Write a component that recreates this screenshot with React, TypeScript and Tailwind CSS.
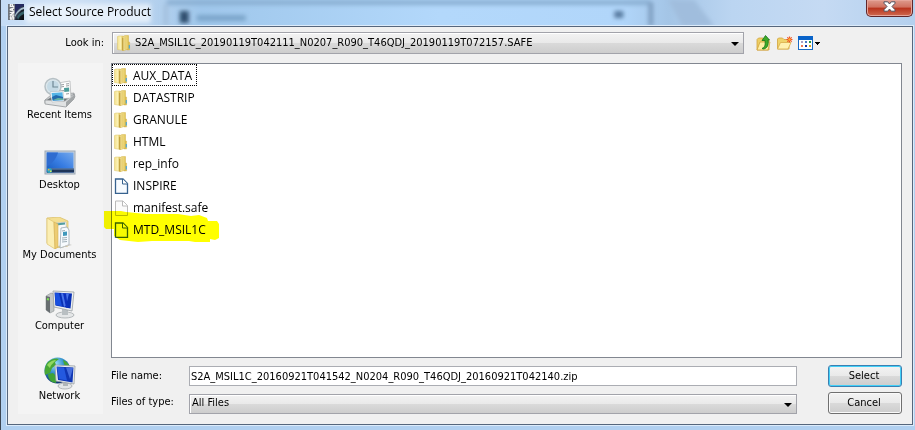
import { useState } from "react";
import type { ReactNode } from "react";

type FileEntry = {
  name: string;
  kind: "folder" | "doc" | "blank";
  marked?: boolean;
};

const files: FileEntry[] = [
  { name: "AUX_DATA", kind: "folder" },
  { name: "DATASTRIP", kind: "folder" },
  { name: "GRANULE", kind: "folder" },
  { name: "HTML", kind: "folder" },
  { name: "rep_info", kind: "folder" },
  { name: "INSPIRE", kind: "doc" },
  { name: "manifest.safe", kind: "blank" },
  { name: "MTD_MSIL1C", kind: "doc", marked: true },
];

const SnapLogo = () => (
  <svg width="16" height="16" viewBox="0 0 16 16" aria-hidden="true">
    <defs>
      <linearGradient id="orbit" x1="0" y1="0" x2="1" y2="1">
        <stop offset="0" stopColor="#15171f" />
        <stop offset=".35" stopColor="#4b5a74" />
        <stop offset=".6" stopColor="#171d29" />
        <stop offset="1" stopColor="#07080c" />
      </linearGradient>
    </defs>
    <rect width="16" height="16" fill="#70757c" />
    <rect x="7" width="9" height="16" fill="url(#orbit)" />
    <path d="M7 0h9v2C12 3 9 6 7 10Z" fill="#242a60" />
    <path d="M7 11C9 7 12 4 16 3v2C12 6 9 9 7 13Z" fill="#a9c1cf" />
    <path d="M9 13c1-3 4-5 7-6v3c-3 1-5 3-6 6Z" fill="#356068" />
    <text
      transform="translate(6 16) rotate(-90)"
      fontSize="6"
      fontWeight="700"
      fill="#fff"
      stroke="#fff"
      strokeWidth=".4"
      fontFamily="Liberation Sans, sans-serif"
    >
      SNAP
    </text>
  </svg>
);

const FolderIcon = () => (
  <svg width="16" height="16" viewBox="0 0 16 16" aria-hidden="true">
    <defs>
      <linearGradient id="folderBack" x1="0" x2="1">
        <stop offset="0" stopColor="#f3e08c" />
        <stop offset=".5" stopColor="#fbf1b4" />
        <stop offset="1" stopColor="#d6b645" />
      </linearGradient>
      <linearGradient id="folderFront" x1="0" x2="1">
        <stop offset="0" stopColor="#f9edaa" />
        <stop offset="1" stopColor="#e2c557" />
      </linearGradient>
    </defs>
    <path d="M10 7h2.600v8H10Z" fill="#dfc157" stroke="#cfae45" strokeWidth=".4" />
    <path d="M.5 1.500 2 1h4.500v14.500L.5 14.500Z" fill="url(#folderBack)" stroke="#dcc467" strokeWidth=".5" />
    <path d="M6 2.500 7.500.6h4V14L6 15.800Z" fill="url(#folderFront)" stroke="#d3b349" strokeWidth=".5" />
    <path d="M5.800 3v12.500" stroke="#b59330" strokeWidth=".9" />
    <path d="M8 1.500V14" stroke="#d9bb55" strokeWidth=".6" />
    <path d="M12.300 10v3.500" stroke="#4aa6dd" strokeWidth="1.200" />
  </svg>
);

const PageIcon = ({ blank }: { blank?: boolean }) => (
  <svg width="16" height="16" viewBox="0 0 16 16" aria-hidden="true">
    <path
      d="M1.500 1H9l4.500 4.500v10h-12Z"
      fill={blank ? "#fafafa" : "#f7fbff"}
      stroke={blank ? "#b9b9b9" : "#37628f"}
      strokeWidth={blank ? 1 : 1.300}
    />
    <path d="M8.500 1v5h5" fill="#fff" stroke={blank ? "#b9b9b9" : "#37628f"} />
  </svg>
);

const RecentIcon = () => (
  <svg width="32" height="32" viewBox="0 0 32 32" aria-hidden="true">
    <path d="m1 23 6-5 23-2 1 4-8 7L1 26Z" fill="#c5c8ca" stroke="#888c8f" strokeWidth=".6" />
    <path d="m3 23 6-4 18-1-6 6Z" fill="#707678" />
    <path d="m1 23 20 1 9-7v5l-8 8-21-3Z" fill="#e0e2e3" stroke="#888c8f" strokeWidth=".7" />
    <path d="m22 25 8-7v4l-8 8Z" fill="#a2a6a8" />
    <path d="m14 6 12-2 1 17-12 1Z" fill="#fdfdfd" stroke="#adb0b2" strokeWidth=".7" />
    <path d="m16 8 4-.5M16 10l4-.5M22 7l3-.4M22 9l3-.4M16 14l4-.5M22 17l3-.4" stroke="#9b9fa2" />
    <path d="m20 11 5-.6.3 4-5 .6Z" fill="#4c9d9a" />
    <circle cx="9" cy="9.500" r="8" fill="#dbe6eb" stroke="#b6c0c5" strokeWidth="1.500" />
    <circle cx="9" cy="9.500" r="6" fill="#c5dae5" />
    <path d="M9 4v6h5" fill="none" stroke="#6f8894" strokeWidth="1.200" />
    <path d="m6 15 13-1 1 10-12 1Z" fill="#fff" stroke="#a9b1b5" strokeWidth=".5" />
    <path d="m7.500 16 11-.8.7 8-10.500.5Z" fill="#55b5e7" />
    <path d="m8 20 4-2 7 2 .3 3-10.600.6Z" fill="#236bac" />
    <path d="m9 23 5-2 5 .6.200 1.500Z" fill="#64b4a0" />
  </svg>
);

const DesktopIcon = () => (
  <svg width="32" height="32" viewBox="0 0 32 32" aria-hidden="true">
    <defs>
      <linearGradient id="desk" x1="0" y1="1" x2="1" y2="0">
        <stop offset="0" stopColor="#1558bd" />
        <stop offset=".5" stopColor="#397ee3" />
        <stop offset="1" stopColor="#75a9ec" />
      </linearGradient>
    </defs>
    <rect x="1" y="4" width="30" height="23" fill="#cbd3dc" stroke="#9ca8b4" />
    <rect x="2.500" y="5.500" width="27" height="20" fill="url(#desk)" />
    <path d="M3 19.500C9 16 13 10 14 5.500H3Z" fill="#2f6cd0" />
    <path d="M3 21.500h27v4H3Z" fill="#1e3559" />
    <path d="M3 22h27" stroke="#7190b5" />
    <circle cx="5.500" cy="23.500" r="2.500" fill="#2ba5be" />
    <path d="M4 22h1.500v1.500H4Z" fill="#efa050" />
    <path d="M6 23.500h1.500V25H6Z" fill="#d8e75a" />
  </svg>
);

const DocumentsIcon = () => (
  <svg width="32" height="32" viewBox="0 0 32 32" aria-hidden="true">
    <path d="m3 1 12-1 9 4v25l-13 2-8-5Z" fill="#f4df91" stroke="#d9bb62" strokeWidth=".7" />
    <path d="m12 6 10-1 1 22-11 3Z" fill="#f9fafb" stroke="#b6bec3" strokeWidth=".6" />
    <path d="m12 7.500 9-1" stroke="#529da2" strokeWidth="2" />
    <path d="m17 11 6-1 2 3v15l-9 3Z" fill="#f7fbfe" stroke="#9caab3" strokeWidth=".8" />
    <path d="m18 14 3-.5M18 21l5-.5M18 23l5-.5M18 25l5-.5" stroke="#9fafb8" />
    <path d="m19 15 4-.5v4L19 19Z" fill="#4098bb" />
    <path d="m3 1 7 4 1 27-8-5Z" fill="#fbeeb3" stroke="#dec371" strokeWidth=".7" />
    <path d="m10 5 4 2v23l-3 2Z" fill="#edcc73" stroke="#d5b156" strokeWidth=".6" />
    <path d="m25 27 3 1-12 3Z" fill="#c9c9c6" />
  </svg>
);

const ComputerIcon = () => (
  <svg width="32" height="32" viewBox="0 0 32 32" aria-hidden="true">
    <path d="m2 8 5-3 3 1v17l-4 2-4-3Z" fill="#c2c6c7" stroke="#8b9092" strokeWidth=".6" />
    <path d="m2 8 4 1v16l-4-3Z" fill="#676d70" />
    <path d="m3 11 2 .5" stroke="#7ce152" strokeWidth="2" />
    <ellipse cx="21" cy="27" rx="9" ry="3" fill="#e5e7e8" stroke="#9ba0a3" strokeWidth=".7" />
    <path d="m18 21 6 1v5h-6Z" fill="#b9bfc2" />
    <path d="m9 3 21 1-2 19-18-4Z" fill="#eceff0" stroke="#989ea2" strokeWidth=".8" />
    <path d="m10.500 4.500 17.500 1-1.500 15-15-3Z" fill="#0830b5" />
    <path d="m11 5 4 .3 3 13-6.500-1.300Z" fill="#1950df" />
    <path d="m17 5.200 8 .4-3 12-2 1.500Z" fill="#4975eb" />
    <path d="m19 5.300 3 .2 2 14.500-2-.5Z" fill="#0c30be" />
  </svg>
);

const NetworkIcon = () => (
  <svg width="34" height="34" viewBox="0 0 34 34" aria-hidden="true">
    <defs>
      <radialGradient id="globe" cx=".4" cy=".25" r=".75">
        <stop offset="0" stopColor="#a6e6fa" />
        <stop offset=".45" stopColor="#3594ce" />
        <stop offset="1" stopColor="#0d3270" />
      </radialGradient>
    </defs>
    <circle cx="14.500" cy="13.500" r="13" fill="url(#globe)" />
    <path d="M5 5c4-4 9-4 11-3l-4 3 1 3-4 3-2 5-5 2c-1-4 0-10 3-13Z" fill="#48a734" />
    <path d="M20 3c5 2 7 6 7 9l-4-2-2-3Z" fill="#48a734" />
    <path d="m5 17 5-1 4 4-1 6-4-1c-3-2-4-5-4-8Z" fill="#3fa337" />
    <path d="M4 8c3-4 7-5 9-5-2 3-5 4-6 8Z" fill="#91d861" />
    <ellipse cx="22" cy="29" rx="7" ry="3" fill="#e3e6e7" stroke="#999fa2" strokeWidth=".7" />
    <path d="M20 24h5v5h-5Z" fill="#b0b6b9" />
    <path d="m12 8 20 1-1 18-18-3Z" fill="#eceff0" stroke="#989ea2" strokeWidth=".8" />
    <path d="m13.500 9.500 17 1-1 15-14.500-2.500Z" fill="#1037b4" />
    <path d="m14 10 7 .5 3 13-8-1.400Z" fill="#2459df" />
    <path d="m23 10.500 7 .5-3 11Z" fill="#456ddd" />
  </svg>
);

const UpFolderIcon = () => (
  <svg width="16" height="16" viewBox="0 0 16 16" aria-hidden="true">
    <path d="M1 15V4.500L2.500 3H7l1 1.500h5V15Z" fill="#edcf65" stroke="#d2a33d" strokeWidth=".8" />
    <path d="m1 15 3-8h10l-2 8Z" fill="#fff0a5" stroke="#d2a33d" strokeWidth=".8" />
    <path d="M6 13.500c3-1 3.500-4 3-8H6L9.500.5 13.500 5H12c1 5-1 8.500-4.500 9Z" fill="#3faa28" stroke="#15731b" strokeWidth=".8" />
  </svg>
);

const NewFolderIcon = () => (
  <svg width="16" height="16" viewBox="0 0 16 16" aria-hidden="true">
    <path d="M.5 14V4l1-1h4L7 4.500h5V14Z" fill="#efd36b" stroke="#d2a33d" strokeWidth=".8" />
    <path d="m.5 14 3-6.500H14L11 14Z" fill="#fff1b0" stroke="#d9ae4a" strokeWidth=".8" />
    <path d="M12.500 1.500v6M9.500 4.500h6M10.300 2.300l4.400 4.400M14.700 2.300l-4.400 4.400" stroke="#ef5126" strokeWidth="1.200" />
    <circle cx="12.500" cy="4.500" r="1.200" fill="#ffb32f" />
  </svg>
);

const ViewIcon = () => (
  <svg width="24" height="16" viewBox="0 0 24 16" aria-hidden="true">
    <rect x=".5" y="1.500" width="14" height="13" fill="#fff" stroke="#176ac5" />
    <path d="M0 1h15v4H0Z" fill="#0963c9" />
    <path d="M3 6h2v2H3Z" fill="#a9a0c5" />
    <path d="M7 6h2v2H7Z" fill="#4b79c4" />
    <path d="M11 6h2v2h-2Z" fill="#25963c" />
    <path d="M3 10h2v2H3Z" fill="#ef7752" />
    <path d="M7 10h2v2H7Z" fill="#1233a0" />
    <path d="M11 10h2v2h-2Z" fill="#d1a51f" />
    <path d="M17 7h5v1h-1v1h-1v1h-1V9h-1V8h-1Z" fill="#000" />
  </svg>
);

const ComboArrow = () => (
  <svg
    className="pointer-events-none absolute right-[5px] top-1/2 -mt-px"
    width="8"
    height="4"
    viewBox="0 0 8 4"
    aria-hidden="true"
  >
    <path d="M0 0h8L4 4Z" fill="#000" />
  </svg>
);

/* blurred windows seen through the title bar */
const Glass = () => (
  <svg className="absolute inset-x-0 top-0 h-[26px] w-full" viewBox="0 0 915 26" preserveAspectRatio="none" aria-hidden="true">
    <defs>
      <linearGradient id="glass" x1="0" x2="1">
        <stop offset="0" stopColor="#c5dcf5" />
        <stop offset=".07" stopColor="#cfe1f5" />
        <stop offset=".16" stopColor="#b7d2ee" />
        <stop offset=".22" stopColor="#9fc7eb" />
        <stop offset=".48" stopColor="#b3d8fb" />
        <stop offset=".68" stopColor="#b1d6fa" />
        <stop offset=".73" stopColor="#a4c5e6" />
        <stop offset=".8" stopColor="#bbd5f1" />
        <stop offset=".9" stopColor="#c5daf3" />
        <stop offset="1" stopColor="#b4d0ee" />
      </linearGradient>
      <filter id="soft" x="-20%" y="-100%" width="140%" height="300%">
        <feGaussianBlur stdDeviation="2" />
      </filter>
    </defs>
    <rect width="915" height="26" fill="url(#glass)" />
    <g filter="url(#soft)">
      <path d="M166 0h484v5H166Z" fill="#8aafd2" />
      <path d="M163 4h4v22h-4Z" fill="#a3bfdc" />
      <path d="M179 11h9v12h-9Z" fill="#2f4d6d" />
      <path d="M196 15h49v6h-49Z" fill="#7ba5ca" />
      <path d="M614 11h9v7h-9Z" fill="#56799e" />
      <path d="M648 2h5v24h-5Z" fill="#7f9fc1" />
      <path d="M668 0h26l20 26h-32Z" fill="#a0bddd" />
      <path d="M25 4h125v19H25Z" fill="#eef5fc" opacity=".8" />
    </g>
  </svg>
);

type PlaceProps = { label: string; children: ReactNode };

const Place = ({ label, children }: PlaceProps) => (
  <button type="button" className="flex min-h-[70px] flex-1 flex-col items-center pt-3.5 pr-0.5">
    <span className="flex h-8 items-center">{children}</span>
    <span className="leading-3">{label}</span>
  </button>
);

const comboClass =
  "h-full w-full appearance-none rounded-none border border-[#a2a3aa] bg-[linear-gradient(#f3f3f3,#e9e9e9_50%,#dadada_50%,#cdcdcd)] pr-5 shadow-[inset_1px_1px_0_#fff]";

const buttonClass =
  "h-[22px] rounded-[3px] border bg-[linear-gradient(#f3f3f3,#e9e9e9_50%,#dadada_50%,#cdcdcd)] pr-0.5 leading-4";

const App = () => {
  const [selected, setSelected] = useState(0);
  const [fileName, setFileName] = useState(
    "S2A_MSIL1C_20160921T041542_N0204_R090_T46QDJ_20160921T042140.zip"
  );

  return (
    <div className="relative flex min-h-screen flex-col border-l border-[#3d4652] bg-[#b1d0f0] pr-0.5 pb-[5px] pl-1.5 font-['DejaVu_Sans_Condensed','DejaVu_Sans',sans-serif] text-[11px] text-black">
      <Glass />

      {/* title bar */}
      <header className="relative flex h-[26px] shrink-0 items-start pl-px">
        <div className="mt-1">
          <SnapLogo />
        </div>
        <h1 className="ml-[5px] font-['Open_Sans',sans-serif] text-[12px] leading-6">Select Source Product</h1>
        <button
          type="button"
          aria-label="Close"
          className="ml-auto flex h-[17px] w-[47px] items-center justify-center rounded-b-[5px] border border-t-0 border-[#60262a] bg-[linear-gradient(#de9b8d,#d0705f_45%,#b8321c_50%,#cf6a50)] pb-1 shadow-[inset_0_0_0_1px_#e6a59a]"
        >
          <svg width="13" height="11" viewBox="0 0 13 11" aria-hidden="true">
            <path
              d="M1 .8h3.700L6.500 3 8.300.8H12v1.500L9 5.500l3 3.200v1.500H8.300L6.500 8l-1.800 2.200H1V8.700l3-3.200-3-3.200Z"
              fill="#fff"
              stroke="#52515f"
            />
          </svg>
        </button>
      </header>

      <main className="relative flex flex-1 flex-col border border-[#56667c] bg-[#f0f0f0] pt-[5px] pb-[10px] shadow-[0_0_0_1px_#dcebfa]">
        <div className="flex h-[22px] items-center">
          <label htmlFor="look-in" className="mr-2 w-24 text-right">
            Look in:
          </label>
          <div className="relative h-full flex-1">
            <span className="pointer-events-none absolute top-[3px] left-[5px]">
              <FolderIcon />
            </span>
            <select id="look-in" className={`${comboClass} pl-[22px]`}>
              <option>S2A_MSIL1C_20190119T042111_N0207_R090_T46QDJ_20190119T072157.SAFE</option>
            </select>
            <ComboArrow />
          </div>
          <div className="flex w-[168px] gap-[5px] pl-3">
            <button type="button" aria-label="Up one level">
              <UpFolderIcon />
            </button>
            <button type="button" aria-label="Create new folder">
              <NewFolderIcon />
            </button>
            <button type="button" aria-label="View menu">
              <ViewIcon />
            </button>
          </div>
        </div>

        <div className="mt-[9px] flex flex-1 gap-2 px-[10px]">
          <nav className="flex w-[85px] shrink-0 flex-col bg-[#f4f4f4]">
            <Place label="Recent Items">
              <RecentIcon />
            </Place>
            <Place label="Desktop">
              <DesktopIcon />
            </Place>
            <Place label="My Documents">
              <DocumentsIcon />
            </Place>
            <Place label="Computer">
              <ComputerIcon />
            </Place>
            <Place label="Network">
              <NetworkIcon />
            </Place>
          </nav>

          <div className="flex min-w-0 flex-1 flex-col">
            <ul className="flex flex-1 flex-col items-start border border-[#828790] bg-white font-['Open_Sans',sans-serif] text-[12px]">
              {files.map((file, i) => (
                <li key={file.name} className="relative">
                  <button
                    type="button"
                    onClick={() => setSelected(i)}
                    className={`flex h-[22px] items-center gap-[3px] border border-dotted pt-px pr-1 pl-px ${
                      i === selected ? "border-black" : "border-transparent"
                    }`}
                  >
                    {file.kind === "folder" ? <FolderIcon /> : <PageIcon blank={file.kind === "blank"} />}
                    {file.name}
                  </button>
                  {file.marked && (
                    <svg
                      className="pointer-events-none absolute -top-[7px] -left-2 mix-blend-multiply"
                      width="117"
                      height="32"
                      viewBox="0 0 117 32"
                      aria-hidden="true"
                    >
                      <path
                        d="M0 0h17l5 1 20 2h32l13 2 8-1 8 3 1 3h9l2 3v14l-4 2-5-1v3H91l-6-1H48l-14 1-18-2-6-4v-7H2L0 16Z"
                        fill="#ff0"
                      />
                    </svg>
                  )}
                </li>
              ))}
            </ul>

            <div className="mt-[7px] flex gap-[31px]">
              <div className="flex flex-1 flex-col gap-[6px]">
                <div className="flex h-[22px] items-center">
                  <label htmlFor="file-name" className="w-[78px] shrink-0">
                    File name:
                  </label>
                  <input
                    id="file-name"
                    type="text"
                    value={fileName}
                    onChange={(e) => setFileName(e.target.value)}
                    className="h-5 min-w-0 flex-1 border border-[#abadb3] bg-white px-px"
                  />
                </div>
                <div className="flex h-[21px] items-center">
                  <label htmlFor="file-type" className="w-[78px] shrink-0 pb-0.5">
                    Files of type:
                  </label>
                  <div className="relative h-5 flex-1">
                    <select id="file-type" className={`${comboClass} pl-0.5`}>
                      <option>All Files</option>
                    </select>
                    <ComboArrow />
                  </div>
                </div>
              </div>
              <div className="flex w-[74px] flex-col gap-[5px]">
                <button type="button" className={`${buttonClass} border-[#3c7fb1] shadow-[inset_0_0_0_1px_#42d0f8]`}>
                  Select
                </button>
                <button type="button" className={`${buttonClass} border-[#707070] shadow-[inset_0_0_0_1px_#fafafa]`}>
                  Cancel
                </button>
              </div>
            </div>
          </div>
        </div>
      </main>
    </div>
  );
};

export default App;
